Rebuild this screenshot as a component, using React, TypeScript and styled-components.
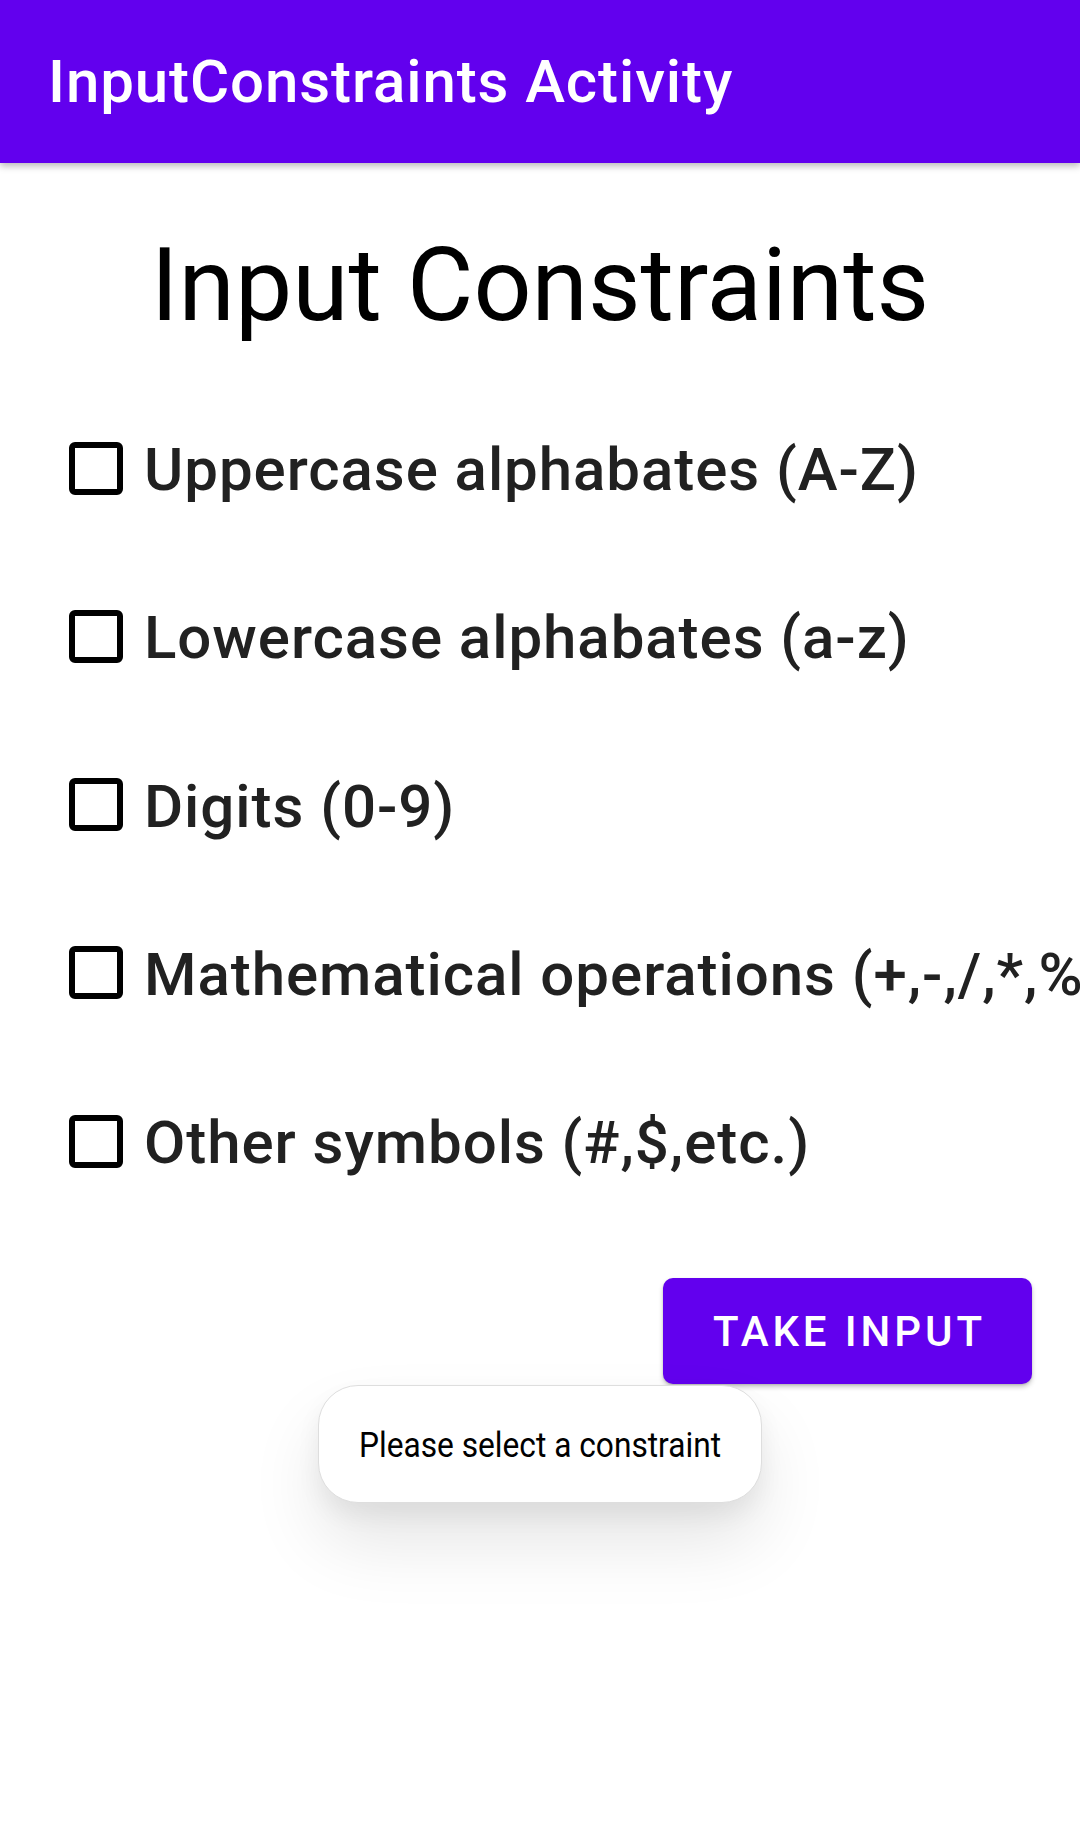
import React from "react";
import styled, { createGlobalStyle } from "styled-components";

const GlobalStyle = createGlobalStyle`
  html, body {
    margin: 0;
    padding: 0;
    background: #ffffff;
  }
  body {
    font-family: Roboto, "Noto Sans", "Liberation Sans", sans-serif;
    overflow: hidden;
  }
  * { box-sizing: border-box; }
`;

const Screen = styled.div`
  position: relative;
  width: 1080px;
  height: 1844px;
  background: #ffffff;
  overflow: hidden;
  display: flex;
  flex-direction: column;
`;

const AppBar = styled.header`
  position: relative;
  z-index: 2;
  height: 163px;
  flex: 0 0 163px;
  background: #6200ee;
  display: flex;
  align-items: center;
  padding-left: 48px;
  box-shadow: 0 3px 7px rgba(0, 0, 0, 0.28);
`;

const AppTitle = styled.h1`
  margin: 0;
  color: #ffffff;
  font-family: Roboto, sans-serif;
  font-weight: 500;
  font-size: 60px;
  line-height: 72px;
  letter-spacing: 0.9px;
`;

const Content = styled.main`
  display: flex;
  flex-direction: column;
`;

const Heading = styled.h2`
  margin: 62px 0 0;
  text-align: center;
  color: #000000;
  font-family: Roboto, sans-serif;
  font-weight: 400;
  font-size: 102px;
  line-height: 120px;
`;

const OptionList = styled.ul`
  list-style: none;
  margin: 39px 0 0;
  padding: 0;
  display: flex;
  flex-direction: column;
`;

const OptionRow = styled.li`
  height: 168.25px;
  display: flex;
  align-items: center;
  gap: 21px;
  padding-left: 69px;
  white-space: nowrap;
  overflow: hidden;
`;

const CheckBox = styled.span`
  flex: 0 0 54px;
  width: 54px;
  height: 53px;
  border: 6px solid #000000;
  border-radius: 6px;
  background: #ffffff;
`;

const OptionLabel = styled.span`
  color: #212121;
  font-family: Roboto, sans-serif;
  font-weight: 500;
  font-size: 60px;
  line-height: 72px;
  letter-spacing: 0.95px;
  margin-top: 4px;
`;

const ButtonRow = styled.div`
  display: flex;
  justify-content: flex-end;
  padding-right: 48px;
  margin-top: 53px;
`;

const TakeButton = styled.button`
  width: 369px;
  height: 106px;
  border: none;
  border-radius: 10px;
  background: #6200ee;
  color: #ffffff;
  font-family: Roboto, sans-serif;
  font-weight: 500;
  font-size: 42px;
  letter-spacing: 3.9px;
  text-transform: uppercase;
  padding: 0 0 0 4px;
  box-shadow: 0 3px 5px rgba(0, 0, 0, 0.22), 0 1px 2px rgba(0, 0, 0, 0.12);
  cursor: pointer;
`;

const Toast = styled.div`
  position: absolute;
  top: 1385px;
  left: 318px;
  width: 444px;
  height: 118px;
  border-radius: 40px;
  background: #ffffff;
  border: 1.5px solid #dedede;
  display: flex;
  align-items: center;
  justify-content: center;
  box-shadow: 0 40px 70px rgba(0, 0, 0, 0.1), 0 12px 24px rgba(0, 0, 0, 0.06);
  z-index: 3;
`;

const ToastText = styled.span`
  display: inline-block;
  color: #000000;
  font-family: Roboto, sans-serif;
  font-weight: 400;
  font-size: 35px;
  line-height: 42px;
  margin-top: 3px;
  white-space: nowrap;
  transform: scaleX(0.905);
`;

const options = [
  "Uppercase alphabates (A-Z)",
  "Lowercase alphabates (a-z)",
  "Digits (0-9)",
  "Mathematical operations (+,-,/,*,%)",
  "Other symbols (#,$,etc.)",
];

export default function App() {
  return (
    <>
      <GlobalStyle />
      <Screen>
        <AppBar>
          <AppTitle>InputConstraints Activity</AppTitle>
        </AppBar>
        <Content>
          <Heading>Input Constraints</Heading>
          <OptionList>
            {options.map((label) => (
              <OptionRow key={label}>
                <CheckBox role="checkbox" aria-checked="false" />
                <OptionLabel>{label}</OptionLabel>
              </OptionRow>
            ))}
          </OptionList>
          <ButtonRow>
            <TakeButton>Take Input</TakeButton>
          </ButtonRow>
        </Content>
        <Toast role="status">
          <ToastText>Please select a constraint</ToastText>
        </Toast>
      </Screen>
    </>
  );
}
